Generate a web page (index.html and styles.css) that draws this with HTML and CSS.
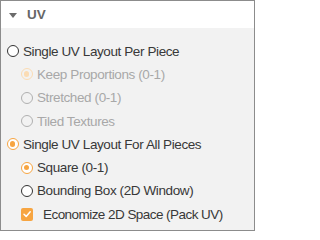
FILE: index.html
```html
<!DOCTYPE html>
<html>
<head>
<meta charset="utf-8">
<link rel="stylesheet" href="styles.css">
</head>
<body>
<div class="panel">
  <div class="header">
    <svg class="caret" width="8" height="5" viewBox="0 0 8 5"><path d="M0 0H8L4 5Z" fill="#6b6b6b"/></svg>
    <span class="title">UV</span>
  </div>
  <div class="content">
    <div class="row"><span class="radio"></span><span class="label">Single UV Layout Per Piece</span></div>
    <div class="row sub disabled"><span class="radio on"></span><span class="label">Keep Proportions (0-1)</span></div>
    <div class="row sub disabled"><span class="radio"></span><span class="label">Stretched (0-1)</span></div>
    <div class="row sub disabled"><span class="radio"></span><span class="label">Tiled Textures</span></div>
    <div class="row"><span class="radio on"></span><span class="label">Single UV Layout For All Pieces</span></div>
    <div class="row sub"><span class="radio on"></span><span class="label">Square (0-1)</span></div>
    <div class="row sub"><span class="radio"></span><span class="label">Bounding Box (2D Window)</span></div>
    <div class="row sub"><span class="check"><svg width="12" height="12" viewBox="0 0 12 12"><path d="M3 6.2L5.2 8.4L9.2 3.8" fill="none" stroke="#fff" stroke-width="1.5" stroke-linecap="round" stroke-linejoin="round"/></svg></span><span class="label check-label">Economize 2D Space (Pack UV)</span></div>
  </div>
</div>
</body>
</html>
```
FILE: styles.css
```css
html, body { margin: 0; padding: 0; }
body { font-family: "Liberation Sans", Arial, sans-serif; }
.panel {
  width: 255px;
  height: 231px;
  box-sizing: border-box;
  border: 1px solid #8c8c8c;
  background: #f2f2f2;
  display: flex;
  flex-direction: column;
}
.header {
  height: 27px;
  background: #fff;
  display: flex;
  align-items: center;
  padding-left: 8px;
  gap: 10px;
}
.caret { margin-top: 1px; }
.title {
  font-weight: bold;
  font-size: 13.5px;
  color: #666;
}
.content {
  padding-top: 11.5px;
  display: flex;
  flex-direction: column;
}
.row {
  height: 23.3px;
  display: flex;
  align-items: center;
  padding-left: 6px;
  font-size: 13.5px;
  letter-spacing: -0.4px;
  color: #383838;
}
.row.sub { padding-left: 20px; }
.row.disabled { color: #a8a8a8; }
.radio {
  width: 12px;
  height: 12px;
  box-sizing: border-box;
  border: 1.3px solid #333;
  border-radius: 50%;
  background: #fff;
  margin-right: 4px;
  position: relative;
  flex: none;
}
.disabled .radio { border-color: #b0b0b0; background: transparent; }
.radio.on { border-color: #f7a541; }
.radio.on::after {
  content: "";
  position: absolute;
  left: 2px; top: 2px;
  width: 5.4px; height: 5.4px;
  border-radius: 50%;
  background: #f7a541;
}
.disabled .radio.on { border-color: #fbdcb4; }
.disabled .radio.on::after { background: #fbdcb4; }
.check {
  width: 12px;
  height: 13px;
  border-radius: 2px;
  background: #f7a541;
  display: flex;
  align-items: center;
  justify-content: center;
  flex: none;
}
.check-label { margin-left: 10px; letter-spacing: -0.55px; }
```
